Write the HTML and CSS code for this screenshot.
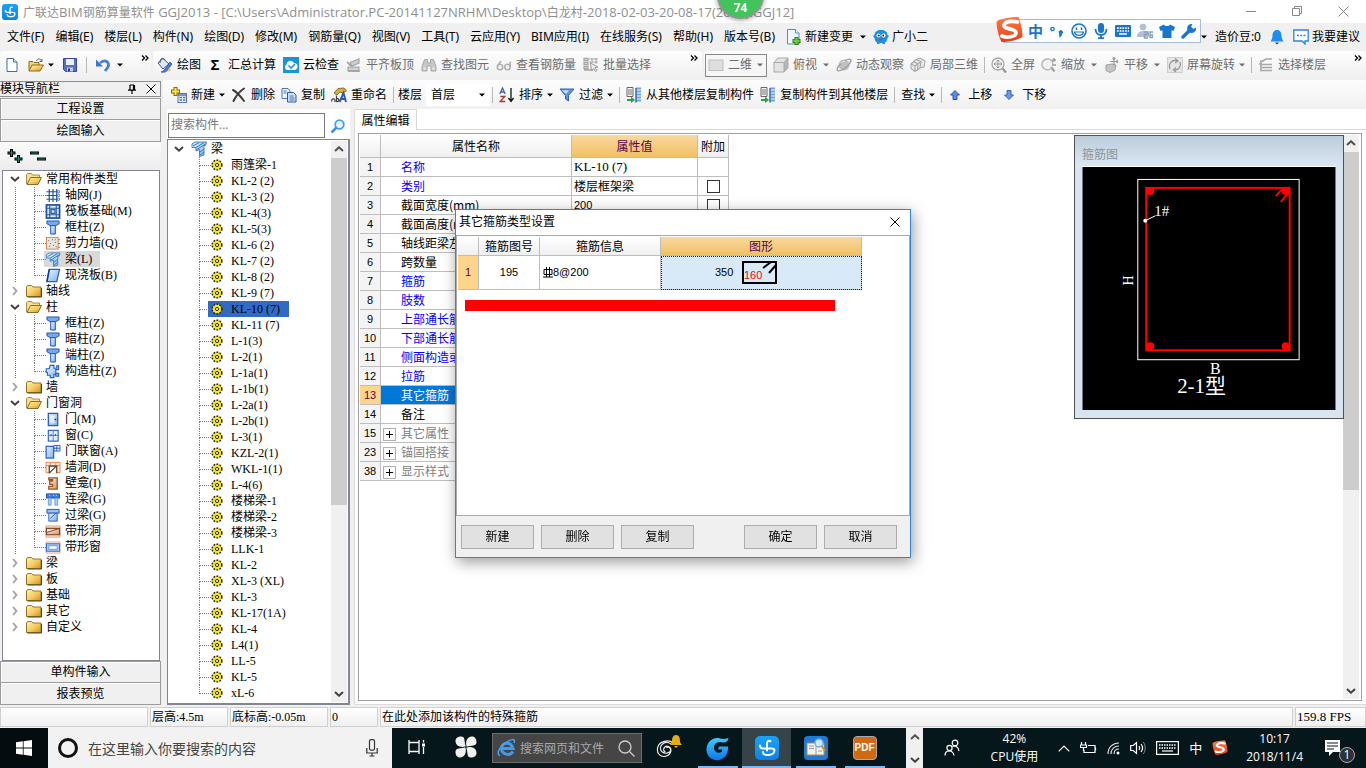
FILE: index.html
```html
<!DOCTYPE html>
<html lang="zh-CN">
<head>
<meta charset="utf-8">
<title>广联达BIM钢筋算量软件 GGJ2013</title>
<link rel="stylesheet" href="styles.css">
</head>
<body>
<svg class="defs" aria-hidden="true">
  <defs>
    <linearGradient id="g-fold" x1="0" y1="0" x2="1" y2="1"><stop offset="0" stop-color="#fff3b0"/><stop offset=".5" stop-color="#f6cf66"/><stop offset="1" stop-color="#d98f14"/></linearGradient>
    <linearGradient id="g-blue" x1="0" y1="0" x2="1" y2="1"><stop offset="0" stop-color="#eaf4ff"/><stop offset="1" stop-color="#7fb0ee"/></linearGradient>
    <linearGradient id="g-brown" x1="0" y1="0" x2="1" y2="1"><stop offset="0" stop-color="#fff4ea"/><stop offset="1" stop-color="#d79262"/></linearGradient>
    <linearGradient id="g-sogou" x1="0" y1="0" x2="0" y2="1"><stop offset="0" stop-color="#ff7a45"/><stop offset="1" stop-color="#ee3d10"/></linearGradient>
    <linearGradient id="g-app" x1="0" y1="0" x2="0" y2="1"><stop offset="0" stop-color="#1ba1f5"/><stop offset="1" stop-color="#0b83ea"/></linearGradient>
    <linearGradient id="g-g" x1="0" y1="0" x2="0" y2="1"><stop offset="0" stop-color="#35d0ff"/><stop offset="1" stop-color="#1273e8"/></linearGradient>
  </defs>
  <symbol id="arrow" viewBox="0 0 6 4"><path d="M0 .5h6L3 3.5z" fill="currentColor"/></symbol>
  <symbol id="more" viewBox="0 0 8 6"><path d="M1 .5 3.5 3 1 5.500M4.500 .5 7 3 4.500 5.500" fill="none" stroke="#000" stroke-width="1.300"/></symbol>
  <symbol id="up" viewBox="0 0 10 6"><path d="M1 5 5 1.300 9 5" fill="none" stroke="#505050" stroke-width="2"/></symbol>
  <symbol id="down" viewBox="0 0 10 6"><path d="M1 1 5 4.700 9 1" fill="none" stroke="#404040" stroke-width="2"/></symbol>
  <symbol id="right" viewBox="0 0 6 10"><path d="M1 1 4.500 5 1 9" fill="none" stroke="#a0a0a0" stroke-width="1.800"/></symbol>
  <symbol id="app" viewBox="0 0 24 24"><rect width="24" height="24" rx="5" fill="url(#g-app)"/><path d="M15.500 5.200C13 4.200 12 5.500 12 8v6.500M5 9.500c0 2 1 3 3 3h8.500c2 0 3 .5 3 2 0 3-3.500 4.500-7 4.500-2.500 0-4.500-1-4.500-3" fill="none" stroke="#fff" stroke-width="2" stroke-linecap="round"/></symbol>
  <symbol id="file" viewBox="0 0 16 16"><path d="M3 1.500h6.500L13 5v9.500H3z" fill="#fdfeff" stroke="#4b6b9a"/><path d="M9.500 1.500V5H13" fill="#dce9f8" stroke="#4b6b9a"/></symbol>
  <symbol id="open" viewBox="0 0 16 16"><path d="M1 13.500V4.500h4l1 1h5v2.500" fill="#f2d27a" stroke="#8a6a20"/><path d="M1 14 4 8h11.500L12 14z" fill="url(#g-fold)" stroke="#8a6a20"/><path d="M8.500 4c1.500-3 4-2.500 5 0m.5-2v2.500h-2.500" fill="none" stroke="#567" /></symbol>
  <symbol id="save" viewBox="0 0 16 16"><path d="M1.500 1.500h13v13h-11l-2-2z" fill="#5a70c8" stroke="#3646a0"/><path d="M4 2h8v6H4z" fill="#e9effb"/><path d="M5 10.500h6v4H5z" fill="#c9cfe0"/><path d="M6 11.500h2v3H6z" fill="#26398a"/></symbol>
  <symbol id="undo" viewBox="0 0 16 16"><path d="M5 6c5-4.500 10-1 8 4l-3 4" fill="none" stroke="#4a7fd4" stroke-width="2.800"/><path d="M1 2.500v7h7z" fill="#3d74cf"/></symbol>
  <symbol id="paint" viewBox="0 0 16 16"><path d="M1 6 6 1.500 12 7 6 12z" fill="#dfe8f5" stroke="#3b5b91"/><path d="M3 6c0-5 3-6 5-3" fill="none" stroke="#33507f"/><path d="M13 5 8 12c-1 2-2 2-4 3 4 .8 6-.5 6.500-2L15 7z" fill="#4c7bd4" stroke="#254b9a" stroke-width=".7"/><path d="m12 10 2 3-3 2z" fill="#f0c537"/></symbol>
  <symbol id="cloud" viewBox="0 0 16 16"><rect width="16" height="16" fill="#1795dc"/><path d="M4 13a3 3 0 0 1-.5-5.500C4 3.500 9 2.500 11 6c3 .2 4 2.500 3.500 4.500C14 12.500 12 13 11 13z" fill="#fff"/><path d="m5.500 8.500 2.500 2.500 4-4" fill="none" stroke="#1795dc" stroke-width="1.600"/></symbol>
  <symbol id="align" viewBox="0 0 16 16"><path d="M4 5.500 13 2v4L6 9zM2 10h11v3.500H2zM2 14.500h12" fill="#cfcfcf" stroke="#a5a5a5" stroke-width="1.200"/><path d="m1 5 4 4" stroke="#999" stroke-width="1.500"/></symbol>
  <symbol id="find" viewBox="0 0 16 16"><path d="M3.500 2.500h3V6h3V2.500h3l2.500 7v4.500H10V9H6v5H1V9.500z" fill="#c8c8c8" stroke="#a8a8a8"/><path d="M2.500 10h2v3h-2zM11.500 10h2v3h-2z" fill="#e2e2e2"/></symbol>
  <symbol id="glasses" viewBox="0 0 16 16"><circle cx="4" cy="10" r="2.700" fill="none" stroke="#b0b0b0" stroke-width="1.600"/><circle cx="11.500" cy="10" r="2.700" fill="none" stroke="#b0b0b0" stroke-width="1.600"/><path d="M1.500 9 5 4M14.200 10V4.500" stroke="#b0b0b0" stroke-width="1.500"/></symbol>
  <symbol id="batch" viewBox="0 0 16 16"><path d="M1 1.500h4v2H1zM1 5.500h4v2H1zM1 9.500h4v2H1zM1 13h9" fill="none" stroke="#a9a9a9" stroke-width="1.300"/><path d="M6 2h9M6 5h9M9 1v5M13 1v6" stroke="#a9a9a9"/><path d="m7.500 6 1 8 2-2.500 2 3 1.500-1-2-3 3-.5z" fill="#eee" stroke="#999"/></symbol>
  <symbol id="flat" viewBox="0 0 16 16"><rect x="1" y="3" width="14" height="10.500" fill="#dedede" stroke="#bdbdbd"/></symbol>
  <symbol id="cube" viewBox="0 0 16 16"><path d="M1 5.500 5 1h10v10l-4 4H1z" fill="#e3e3e3" stroke="#a9a9a9"/><path d="M11 5.500 15 1v10l-4 4z" fill="#b5b5b5"/><path d="M1 5.500h10V15M11 5.500 15 1" stroke="#a9a9a9" fill="none"/></symbol>
  <symbol id="orbit" viewBox="0 0 16 16"><circle cx="8" cy="8" r="5.500" fill="#c0c0c0"/><ellipse cx="8" cy="8" rx="8.500" ry="3" transform="rotate(-40 8 8)" fill="none" stroke="#a2a2a2" stroke-width="1.300"/><path d="M5 6.500c1-2 3-2 4-2" stroke="#eee" fill="none"/></symbol>
  <symbol id="local3d" viewBox="0 0 16 16"><path d="m1 7 5-4.500 5 2L10 11l-5 3.500-4-3zM6 2.500 10 1l5 3-1 6-4 1M1 7l4 2v5.500M5 9l6-4.500M3.500 4.500 8 7l-.5 5.500" fill="#e8e8e8" stroke="#a9a9a9" stroke-width="1.100"/></symbol>
  <symbol id="full" viewBox="0 0 16 16"><circle cx="7" cy="7" r="6" fill="#f2f2f2" stroke="#aaa" stroke-width="1.300"/><path d="M7 3v8M3 7h8M5.500 4.500 7 3l1.500 1.500M5.500 9.500 7 11l1.500-1.500M4.500 5.500 3 7l1.500 1.500M9.500 5.500 11 7 9.500 8.500" fill="none" stroke="#999"/><path d="m11.500 11.500 3.500 4" stroke="#999" stroke-width="2.400"/></symbol>
  <symbol id="zoomi" viewBox="0 0 16 16"><path d="M9.500 12A5.500 5.500 0 1 1 12 7" fill="#f2f2f2" stroke="#b4b4b4" stroke-width="1.400"/><path d="m10 10 3.500 4.500" stroke="#a5a5a5" stroke-width="2.400"/><path d="M11 3h4M13 1v4M11 8h4" stroke="#999" stroke-width="1.300"/></symbol>
  <symbol id="pan" viewBox="0 0 16 16"><path d="M2 8 8 7l4 1-1 5-5 2.500-4-2z" fill="#c4c4c4" stroke="#a2a2a2"/><path d="M10 .5v8M6 4.500h8M10 .5 8.500 2M10 .5 11.500 2M14 4.500 12.500 3M14 4.500 12.500 6" fill="none" stroke="#9b9b9b" stroke-width="1.200"/></symbol>
  <symbol id="rotate" viewBox="0 0 16 16"><rect x=".5" y=".5" width="15" height="15" fill="#e6e6e6" stroke="#cfcfcf"/><path d="M3 12c-2-5 2-10 7-8M13 5c1.500 4-1 8.500-6 8M8 1.500 11 4 8 6M9 15l-2.500-2L9 10.500" fill="none" stroke="#999" stroke-width="1.300"/></symbol>
  <symbol id="floors" viewBox="0 0 16 16"><path d="M2 4h4M1 7h3M4 4.500 8 2h6M4 7.500h10M4 10.500h10M4 13.500h10M3 4.500v10" fill="none" stroke="#a9a9a9" stroke-width="1.700"/></symbol>
  <symbol id="newc" viewBox="0 0 16 16"><path d="M4.500 0v9M0 4.500h9" stroke="#8c6b00" stroke-width="4"/><path d="M4.500 1v7M1 4.500h7" stroke="#ffe14a" stroke-width="2"/><rect x="7" y="6.500" width="8.500" height="9" fill="#eef4fd" stroke="#5776b5"/><path d="M7 8h8.500M8.500 10.500h2.500M12 10.500h2.500M8.500 13h2.500M12 13h2.500" stroke="#5776b5" stroke-width="1.600"/></symbol>
  <symbol id="del" viewBox="0 0 16 16"><path d="M2 3c4 2 8 7 11 11M13 1.500C9 4 5 9 2.500 14" fill="none" stroke="#3d3d3d" stroke-width="2" stroke-linecap="round"/></symbol>
  <symbol id="copy" viewBox="0 0 16 16"><path d="M1 1.500h6L9 4v7.500H1z" fill="#eef4fd" stroke="#4d74b8"/><path d="M6.500 5.500h6L15 8v7H6.500z" fill="#cfe0f7" stroke="#2f5aa8"/><path d="M8.500 9h4M8.500 11h5M8.500 13h5M2.500 4h3M2.500 6h3" stroke="#4d74b8"/></symbol>
  <symbol id="rename" viewBox="0 0 16 16"><path d="M3 6 7 1.500 13 1l2.500 3-3.500 2-3-1-3 3z" fill="#d8b03a" stroke="#6b5310" stroke-width=".8"/><path d="M1 14.500c-1.500-3 3-3.500 3-1.500v2M5.500 8.500v6c3 .5 3-3.500 0-3" fill="none" stroke="#444" stroke-width="1.200"/><path d="m8.500 15 4-9 2.500 9M10 12h4" fill="none" stroke="#2b56b8" stroke-width="1.900"/></symbol>
  <symbol id="sort" viewBox="0 0 16 16"><path d="m.8 7 2.700-6L6.200 7M1.800 5h3.500" fill="none" stroke="#3c61ad" stroke-width="1.300"/><path d="M1.300 9.500h4.500l-4.500 5h5" fill="none" stroke="#a33b33" stroke-width="1.300"/><path d="M12 1v13M9.500 11l2.500 3.500 2.500-3.500" fill="none" stroke="#111" stroke-width="1.300"/></symbol>
  <symbol id="filter" viewBox="0 0 16 16"><path d="M1 2h14L9.500 8.500V14l-3-2V8.500z" fill="#5f93ea" stroke="#2b62c0"/><path d="M3 3.200h7L7 7z" fill="#cfe0fb"/></symbol>
  <symbol id="copyfl" viewBox="0 0 16 16"><path d="M1 .5h6v9H1z" fill="#f5f5f5" stroke="#666"/><path d="M2 3h4M2 5h4M2 7h4" stroke="#777"/><path d="M10 1.500h5M10 4.500h5M10 7.500h5M10 10.500h5M10 13.500h5" stroke="#6fa4e0" stroke-width="2"/><path d="M10 1v14.500" stroke="#2f6bb8" stroke-width="1.500"/><path d="M1 12h4v-2.500L9 13l-4 3v-2H1z" fill="#27a143"/></symbol>
  <symbol id="mvup" viewBox="0 0 10 10"><path d="M5 .5 9.500 5H7v4.500H3V5H.5z" fill="#5b8ce8" stroke="#1f4aa8" stroke-width=".9"/></symbol>
  <symbol id="mvdn" viewBox="0 0 10 10"><path d="M5 9.500 .5 5H3V.5h4V5h2.500z" fill="#6c9bee" stroke="#2d5ab8" stroke-width=".9"/></symbol>
  <symbol id="chg" viewBox="0 0 16 16"><path d="M1.500 .5h8L13 4v11H1.500z" fill="#eef7ff" stroke="#4b8fc4"/><path d="M9.500 .5V4H13" fill="#fff" stroke="#4b8fc4"/><path d="M10.500 8v8M6.500 12h8" stroke="#3a7a1c" stroke-width="4"/><path d="M10.500 9v6M7.500 12h6" stroke="#6cd03a" stroke-width="2.200"/></symbol>
  <symbol id="mascot" viewBox="0 0 16 16"><path d="M8 1C12 1 14.500 3 14.500 6l1.500 1-1.500 2c-.5 3-1.500 4-2.500 4.500V15H9.500v-1h-3v1H4v-1.500C2.500 13 2 11.500 1.500 9L0 7l1.500-1C1.500 3 4 1 8 1z" fill="#1e8fe6"/><circle cx="5.500" cy="6.500" r="2" fill="#fff"/><circle cx="10.500" cy="6.500" r="2" fill="#fff"/><circle cx="5.800" cy="6.500" r=".9" fill="#123"/><circle cx="10.200" cy="6.500" r=".9" fill="#123"/><path d="M5.500 9.500c1.500 1.800 3.500 1.800 5 0" stroke="#c33" fill="none"/></symbol>
  <symbol id="bell" viewBox="0 0 14 16"><path d="M7 1c-3 0-4.500 2.500-4.500 5.500 0 3-1 4.500-2 6h13c-1-1.500-2-3-2-6C11.500 3.500 10 1 7 1z" fill="#1e8cf0"/><path d="M5 13.500h4L7 15.500z" fill="#0a3c80"/></symbol>
  <symbol id="talk" viewBox="0 0 16 16"><path d="M.8 1h14.400v11H12v3l-3-3H.8z" fill="#fff" stroke="#2b82dd" stroke-width="1.300"/><path d="M4 6.500h2M7.200 6.500h2M10.400 6.500h2" stroke="#2b82dd" stroke-width="1.600"/></symbol>
  <symbol id="sogou" viewBox="0 0 28 28"><path d="M3 4C9 2 17 .5 23 1c2 5 4 12 4 20-5 3-14 5-21 5C3 20 1 11 1 6z" fill="url(#g-sogou)"/><path d="M22 6c-6-1.500-13-.5-13.500 3.500S20 12 20.500 16.500 11 22 6.500 20" fill="none" stroke="#fff" stroke-width="3.800" stroke-linecap="round"/></symbol>
  <symbol id="smile" viewBox="0 0 16 16"><circle cx="8" cy="8" r="7" fill="none" stroke="#1a75cc" stroke-width="1.600"/><path d="M5.500 4.500v2.500M10.500 4.500v2.500" stroke="#1a75cc" stroke-width="1.500"/><path d="M3.500 9h9c-1 4.500-8 4.500-9 0z" fill="none" stroke="#1a75cc" stroke-width="1.200"/></symbol>
  <symbol id="mic" viewBox="0 0 16 16"><rect x="5" y="0" width="6" height="10" rx="3" fill="#1a75cc"/><path d="M2.500 6c0 8 11 8 11 0M8 12v3M5 15.200h6" fill="none" stroke="#1a75cc" stroke-width="1.800"/></symbol>
  <symbol id="kbd" viewBox="0 0 16 12"><rect width="16" height="12" rx="1" fill="#1a75cc"/><path d="M2 3.200h12M2 6h12" stroke="#fff" stroke-width="1.700" stroke-dasharray="1.700 1"/><path d="M4 9h8" stroke="#fff" stroke-width="1.500"/></symbol>
  <symbol id="person" viewBox="0 0 16 16"><circle cx="6" cy="4" r="3.300" fill="#b3bfd3"/><path d="M0 14c0-8 12-8 12-2v2z" fill="#b3bfd3"/><path d="M7 9h4v2.500H7.500V15H11M12.500 9H16M13 9v5.500h2.500V12H13" fill="none" stroke="#8e9db8" stroke-width="1.400"/></symbol>
  <symbol id="shirt" viewBox="0 0 16 16"><path d="m5 1.500c1 2 5 2 6 0L16 4l-1.500 4-2-.7V15h-9V7.300l-2 .7L0 4z" fill="#1a75cc"/></symbol>
  <symbol id="wrench" viewBox="0 0 16 16"><path d="m2 14 8-8" stroke="#1a75cc" stroke-width="3.400" stroke-linecap="round"/><path d="M15 4.500 12 6 10 4l1.500-3A4.500 4.500 0 1 0 15 4.500z" fill="#1a75cc"/></symbol>
  <symbol id="pin" viewBox="0 0 10 10"><path d="M3 1v5M7.500 1v5M3 1h4M6.500 1v5M1 6.200h8M5 6v4" fill="none" stroke="#000" stroke-width="1.200"/></symbol>
  <symbol id="x" viewBox="0 0 10 10"><path d="m.5.5 9 9m0-9-9 9" stroke="currentColor" fill="none"/></symbol>
  <symbol id="expand" viewBox="0 0 16 16"><path d="M4.500 1v8M.5 5h8M11.500 7v8M7.500 11h8" stroke="#000" stroke-width="3"/><path d="M4.500 2v6M1.500 5h6M11.500 8v6M8.500 11h6" stroke="#1c8a78" stroke-width="1"/></symbol>
  <symbol id="collapse" viewBox="0 0 16 16"><path d="M0 5h9M7 11h9" stroke="#000" stroke-width="3"/><path d="M1 5h7M8 11h7" stroke="#1c8a78"/></symbol>
  <symbol id="fopen" viewBox="0 0 16 14"><path d="M.5 12V2.500l1-1h4l1 1.500h7V5" fill="#f9e08e" stroke="#a98a4a"/><path d="M1 12.500 4.500 5.500h11L12 12.500z" fill="url(#g-fold)" stroke="#8e6b28"/></symbol>
  <symbol id="fclose" viewBox="0 0 16 14"><path d="M.5 12.500V3l1-1.500h4L7 3h8v9.500z" fill="url(#g-fold)" stroke="#94742f"/><path d="M1.500 13h14V4" fill="none" stroke="#5d4210"/></symbol>
  <symbol id="grid" viewBox="0 0 16 16"><path d="M1 4h12M1 8h12M1 12h12M4 1v14M8 1v14M12 1v14" stroke="#1f52a0" stroke-width="1.300"/><g fill="#fff" stroke="#2f6fd0"><circle cx="14" cy="4" r="1.200"/><circle cx="14" cy="8" r="1.200"/><circle cx="14" cy="12" r="1.200"/></g></symbol>
  <symbol id="raft" viewBox="0 0 16 16"><rect x="1" y="1" width="14" height="14" fill="#dbeaff" stroke="#1f4e96" stroke-width="1.800"/><path d="M4.500 1v14M11.500 1v14M1 4.500h14M1 11.500h14M6 6h4v4H6z" fill="none" stroke="#2a5fb0" stroke-width="1.200"/></symbol>
  <symbol id="col" viewBox="0 0 16 16"><path d="M1.500 1h13v3l-3.500 2H5L1.500 4z" fill="#77a8ee" stroke="#1d52b0"/><path d="M5.500 6h5v9h-5z" fill="url(#g-blue)" stroke="#1d52b0"/></symbol>
  <symbol id="wall" viewBox="0 0 16 16"><rect x="1" y="1.500" width="12.500" height="12.500" fill="#e9e4df" stroke="#d3814d"/><path d="M3 5h1M7 4h1M10 7h1M5 8h1M8 10h1M4 11h1M11 11.500h1M10 4h1" stroke="#555"/><path d="M13.500 4h2M13.500 8h2M13.500 12h2" stroke="#c06020"/></symbol>
  <symbol id="beam" viewBox="0 0 16 16"><path d="M1 3 4 1h11.500l-1 3.500h-1.500V14L8.500 15.500V8.500L5 10V6.500H1z" fill="url(#g-blue)" stroke="#3b88cc"/><path d="m2 5 6-3.500M5 6.500l8-5M5 9l9.500-6M9 11l4-3M9 14l4-3" stroke="#2c7cc8"/></symbol>
  <symbol id="slab" viewBox="0 0 16 16"><path d="M4 1.500h11L12 14.500H1.500z" fill="url(#g-blue)" stroke="#2560b8" stroke-width="1.300"/><path d="M4 1.500 1.500 14.500" stroke="#0f3c88" stroke-width="1.600"/></symbol>
  <symbol id="zcol" viewBox="0 0 16 16"><path d="M5 1.500h4v3h3V2h2v4h-3v4h3v3h-3v-2H9v3.500H5V12H2V9H.8V5H4z" fill="url(#g-blue)" stroke="#2560b8" stroke-width="1.200"/></symbol>
  <symbol id="door" viewBox="0 0 16 16"><rect x="3" y="1.500" width="10" height="13" fill="url(#g-blue)" stroke="#2560c8" stroke-width="1.400"/><rect x="5" y="4" width="5" height="8" fill="#fff" opacity=".6"/><path d="M9.500 8h2" stroke="#123c90" stroke-width="1.500"/></symbol>
  <symbol id="win" viewBox="0 0 16 16"><rect x="3" y="2.500" width="10.500" height="11.500" fill="#deedff" stroke="#2560c8" stroke-width="1.200"/><path d="M8.200 2.500V14M3 8h10.500" stroke="#4a83dd"/><path d="M6 6.500v2M10.500 6.500v2" stroke="#123c90"/></symbol>
  <symbol id="dwin" viewBox="0 0 16 16"><rect x=".7" y="2.500" width="8" height="12.500" fill="url(#g-blue)" stroke="#2560c8" stroke-width="1.300"/><path d="M9 1.500h6.500v6H9zM12 1.500v6M9 4.500h6.500" fill="#e3f0ff" stroke="#2560c8"/></symbol>
  <symbol id="whole" viewBox="0 0 16 16"><path d="M.5 2.500h15v11H.5zM.5 6h15M5 2.500V6M11 2.500V6" fill="#fbeadf" stroke="#e0834d"/><path d="M4 14V6.500h8V14M4 14l7-7" fill="#fff" stroke="#5c3b24" stroke-width="1.300"/></symbol>
  <symbol id="niche" viewBox="0 0 16 16"><path d="M3.500 2h9v12h-9v-3h4V9h-3V5.500h3V4h-4z" fill="url(#g-brown)" stroke="#a0541d" stroke-width="1.400"/></symbol>
  <symbol id="lbeam" viewBox="0 0 16 16"><path d="M1 2h14v4.500H1z" fill="#3b7ad8" stroke="#1d52b0"/><path d="M3 6.500h3V14H3zM10 6.500h3V14h-3z" fill="#a9cdf8" stroke="#6b9ee6"/><path d="M4 3.500h1M8 3.500h1M11 3.500h1" stroke="#fff"/></symbol>
  <symbol id="obeam" viewBox="0 0 16 16"><path d="M1.500 1.500h13v4h-13z" fill="#9ac3f6" stroke="#1d52b0"/><path d="M3.500 5.500h9V14h-9zM5 11l7-6" fill="url(#g-blue)" stroke="#2a64bd"/></symbol>
  <symbol id="bhole" viewBox="0 0 16 16"><path d="M.5 2h15v12H.5z" fill="#f8ded0" stroke="#e6a184"/><path d="M1 4.500h14v7H1z" fill="url(#g-brown)" stroke="#7b3c15" stroke-width="1.200"/><path d="M1 9 14 5H1z" fill="#fff" stroke="#7b3c15"/></symbol>
  <symbol id="bwin" viewBox="0 0 16 16"><path d="M.5 2h15v12H.5z" fill="#fbe4dc" stroke="#efb4a4"/><path d="M1 4h14v8H1z" fill="#a9cbfa" stroke="#3c70cf" stroke-width="1.200"/><path d="M3.500 6h9v4h-9z" fill="#f2f8ff" stroke="#6a98e4"/></symbol>
  <symbol id="gear" viewBox="0 0 12 12"><circle cx="6" cy="6" r="4.700" fill="#f6ee00" stroke="#222" stroke-width="1.800" stroke-dasharray="1.800 1.200"/><circle cx="6" cy="6" r="3.900" fill="#f6ee00"/><circle cx="6" cy="6" r="1.600" fill="#fff36b" stroke="#222"/></symbol>
  <symbol id="mag" viewBox="0 0 16 16"><circle cx="9.500" cy="6.500" r="4.300" fill="#e6f5ff" stroke="#3fa0e8" stroke-width="1.800"/><path d="m6.500 9.500-5 5" stroke="#3f8fe0" stroke-width="2.600"/></symbol>
</svg>

<header class="titlebar">
  <svg class="ic"><use href="#app"/></svg>
  <h1><span>广联达</span>BIM<span>钢筋算量软件</span> GGJ2013 - [C:\Users\Administrator.PC-20141127NRHM\Desktop\<span>白龙村</span>-2018-02-03-20-08-17(2666).GGJ12]</h1>
  <div class="winbtns">
    <button aria-label="最小化"><svg viewBox="0 0 11 11"><path d="M0 5.500h10" stroke="#888"/></svg></button>
    <button aria-label="还原"><svg viewBox="0 0 11 11"><path d="M.5 2.500h7v7h-7zM2.500 2.500v-2h7v7h-2" fill="none" stroke="#888"/></svg></button>
    <button aria-label="关闭"><svg viewBox="0 0 11 11"><path d="m.5.5 10 10m0-10-10 10" stroke="#888"/></svg></button>
  </div>
</header>

<nav class="menubar">
  <button>文件(F)</button><button>编辑(E)</button><button>楼层(L)</button><button>构件(N)</button><button>绘图(D)</button><button>修改(M)</button><button>钢筋量(Q)</button><button>视图(V)</button><button>工具(T)</button><button>云应用(Y)</button><button>BIM应用(I)</button><button>在线服务(S)</button><button>帮助(H)</button><button>版本号(B)</button>
  <button><svg class="ic"><use href="#chg"/></svg>新建变更<svg class="ar wide"><use href="#arrow"/></svg></button>
  <button class="helper"><svg class="ic"><use href="#mascot"/></svg>广小二</button>
  <div class="account">
    <svg class="ar"><use href="#arrow"/></svg>
    <button>造价豆:0</button>
    <button aria-label="消息"><svg class="ic"><use href="#bell"/></svg></button>
    <button><svg class="ic"><use href="#talk"/></svg>我要建议</button>
  </div>
</nav>

<div class="toolbar main">
  <div class="strip files">
    <button aria-label="新建"><svg class="ic"><use href="#file"/></svg></button>
    <button aria-label="打开"><svg class="ic"><use href="#open"/></svg><svg class="ar"><use href="#arrow"/></svg></button>
    <button aria-label="保存"><svg class="ic"><use href="#save"/></svg></button>
    <i class="sep"></i>
    <button aria-label="撤销"><svg class="ic"><use href="#undo"/></svg><svg class="ar wide"><use href="#arrow"/></svg></button>
    <svg class="more"><use href="#more"/></svg>
  </div>
  <div class="strip calc">
    <button><svg class="ic"><use href="#paint"/></svg>绘图</button>
    <button><b class="sigma">Σ</b>汇总计算</button>
    <button><svg class="ic"><use href="#cloud"/></svg>云检查</button>
    <button disabled><svg class="ic"><use href="#align"/></svg>平齐板顶</button>
    <button disabled><svg class="ic"><use href="#find"/></svg>查找图元</button>
    <button disabled><svg class="ic"><use href="#glasses"/></svg>查看钢筋量</button>
    <button disabled><svg class="ic"><use href="#batch"/></svg>批量选择</button>
    <svg class="more"><use href="#more"/></svg>
  </div>
  <div class="strip view">
    <label class="dim"><svg class="ic"><use href="#flat"/></svg><select disabled aria-label="视图"><option>二维</option></select><svg class="ar"><use href="#arrow"/></svg></label>
    <button disabled><svg class="ic"><use href="#cube"/></svg>俯视<svg class="ar wide"><use href="#arrow"/></svg></button>
    <button disabled><svg class="ic"><use href="#orbit"/></svg>动态观察</button>
    <button disabled><svg class="ic"><use href="#local3d"/></svg>局部三维</button>
    <i class="sep"></i>
    <button disabled><svg class="ic"><use href="#full"/></svg>全屏</button>
    <button disabled><svg class="ic"><use href="#zoomi"/></svg>缩放<svg class="ar wide"><use href="#arrow"/></svg></button>
    <button disabled><svg class="ic"><use href="#pan"/></svg>平移<svg class="ar wide"><use href="#arrow"/></svg></button>
    <button disabled><svg class="ic"><use href="#rotate"/></svg>屏幕旋转<svg class="ar"><use href="#arrow"/></svg></button>
    <i class="sep"></i>
    <button disabled><svg class="ic"><use href="#floors"/></svg>选择楼层</button>
    <svg class="more"><use href="#more"/></svg>
  </div>
</div>

<div class="workspace">
  <aside class="dock">
    <div class="dockhead"><h2>模块导航栏</h2><svg class="s10"><use href="#pin"/></svg><button aria-label="关闭"><svg class="s10"><use href="#x"/></svg></button></div>
    <button class="section">工程设置</button>
    <button class="section">绘图输入</button>
    <div class="docktools"><button aria-label="展开"><svg class="ic"><use href="#expand"/></svg></button><button aria-label="折叠"><svg class="ic"><use href="#collapse"/></svg></button></div>
    <ul class="tree modules">
      <li class="open"><div><svg class="tw"><use href="#down"/></svg><svg class="fo"><use href="#fopen"/></svg>常用构件类型</div>
        <ul>
          <li><svg class="ic"><use href="#grid"/></svg><span>轴网(J)</span></li>
          <li><svg class="ic"><use href="#raft"/></svg><span>筏板基础(M)</span></li>
          <li><svg class="ic"><use href="#col"/></svg><span>框柱(Z)</span></li>
          <li><svg class="ic"><use href="#wall"/></svg><span>剪力墙(Q)</span></li>
          <li class="current"><svg class="ic"><use href="#beam"/></svg><span>梁(L)</span></li>
          <li><svg class="ic"><use href="#slab"/></svg><span>现浇板(B)</span></li>
        </ul></li>
      <li><div><svg class="tw"><use href="#right"/></svg><svg class="fo"><use href="#fclose"/></svg>轴线</div></li>
      <li class="open"><div><svg class="tw"><use href="#down"/></svg><svg class="fo"><use href="#fopen"/></svg>柱</div>
        <ul>
          <li><svg class="ic"><use href="#col"/></svg><span>框柱(Z)</span></li>
          <li><svg class="ic"><use href="#col"/></svg><span>暗柱(Z)</span></li>
          <li><svg class="ic"><use href="#col"/></svg><span>端柱(Z)</span></li>
          <li><svg class="ic"><use href="#zcol"/></svg><span>构造柱(Z)</span></li>
        </ul></li>
      <li><div><svg class="tw"><use href="#right"/></svg><svg class="fo"><use href="#fclose"/></svg>墙</div></li>
      <li class="open"><div><svg class="tw"><use href="#down"/></svg><svg class="fo"><use href="#fopen"/></svg>门窗洞</div>
        <ul>
          <li><svg class="ic"><use href="#door"/></svg><span>门(M)</span></li>
          <li><svg class="ic"><use href="#win"/></svg><span>窗(C)</span></li>
          <li><svg class="ic"><use href="#dwin"/></svg><span>门联窗(A)</span></li>
          <li><svg class="ic"><use href="#whole"/></svg><span>墙洞(D)</span></li>
          <li><svg class="ic"><use href="#niche"/></svg><span>壁龛(I)</span></li>
          <li><svg class="ic"><use href="#lbeam"/></svg><span>连梁(G)</span></li>
          <li><svg class="ic"><use href="#obeam"/></svg><span>过梁(G)</span></li>
          <li><svg class="ic"><use href="#bhole"/></svg><span>带形洞</span></li>
          <li><svg class="ic"><use href="#bwin"/></svg><span>带形窗</span></li>
        </ul></li>
      <li><div><svg class="tw"><use href="#right"/></svg><svg class="fo"><use href="#fclose"/></svg>梁</div></li>
      <li><div><svg class="tw"><use href="#right"/></svg><svg class="fo"><use href="#fclose"/></svg>板</div></li>
      <li><div><svg class="tw"><use href="#right"/></svg><svg class="fo"><use href="#fclose"/></svg>基础</div></li>
      <li><div><svg class="tw"><use href="#right"/></svg><svg class="fo"><use href="#fclose"/></svg>其它</div></li>
      <li><div><svg class="tw"><use href="#right"/></svg><svg class="fo"><use href="#fclose"/></svg>自定义</div></li>
    </ul>
    <button class="section">单构件输入</button>
    <button class="section">报表预览</button>
  </aside>

  <main class="editor">
    <div class="toolbar sub">
      <button><svg class="ic"><use href="#newc"/></svg>新建<svg class="ar"><use href="#arrow"/></svg></button>
      <button><svg class="ic"><use href="#del"/></svg>删除</button>
      <button><svg class="ic"><use href="#copy"/></svg>复制</button>
      <button><svg class="ic"><use href="#rename"/></svg>重命名</button>
      <i class="sep"></i>
      <label class="floor">楼层<span class="combo"><select><option>首层</option></select><svg class="ar"><use href="#arrow"/></svg></span></label>
      <i class="sep"></i>
      <button><svg class="ic"><use href="#sort"/></svg>排序<svg class="ar"><use href="#arrow"/></svg></button>
      <button><svg class="ic"><use href="#filter"/></svg>过滤<svg class="ar"><use href="#arrow"/></svg></button>
      <i class="sep"></i>
      <button><svg class="ic"><use href="#copyfl"/></svg>从其他楼层复制构件</button>
      <button><svg class="ic"><use href="#copyfl"/></svg>复制构件到其他楼层</button>
      <i class="sep"></i>
      <button>查找<svg class="ar"><use href="#arrow"/></svg></button>
      <i class="sep"></i>
      <button class="move"><svg class="s10"><use href="#mvup"/></svg>上移</button>
      <button class="move"><svg class="s10"><use href="#mvdn"/></svg>下移</button>
    </div>
    <div class="panes">
      <section class="components">
        <div class="search"><input type="text" placeholder="搜索构件..." aria-label="搜索构件"><button aria-label="搜索"><svg class="ic"><use href="#mag"/></svg></button></div>
        <div class="listbox">
          <ul class="tree beams">
            <li class="open"><div><svg class="tw"><use href="#down"/></svg><svg class="ic"><use href="#beam"/></svg>梁</div>
              <ul>
                <li><svg class="ge"><use href="#gear"/></svg><span class="zh">雨篷梁-1</span></li>
                <li><svg class="ge"><use href="#gear"/></svg><span>KL-2 (2)</span></li>
                <li><svg class="ge"><use href="#gear"/></svg><span>KL-3 (2)</span></li>
                <li><svg class="ge"><use href="#gear"/></svg><span>KL-4(3)</span></li>
                <li><svg class="ge"><use href="#gear"/></svg><span>KL-5(3)</span></li>
                <li><svg class="ge"><use href="#gear"/></svg><span>KL-6 (2)</span></li>
                <li><svg class="ge"><use href="#gear"/></svg><span>KL-7 (2)</span></li>
                <li><svg class="ge"><use href="#gear"/></svg><span>KL-8 (2)</span></li>
                <li><svg class="ge"><use href="#gear"/></svg><span>KL-9 (7)</span></li>
                <li class="picked"><svg class="ge"><use href="#gear"/></svg><span>KL-10 (7)</span></li>
                <li><svg class="ge"><use href="#gear"/></svg><span>KL-11 (7)</span></li>
                <li><svg class="ge"><use href="#gear"/></svg><span>L-1(3)</span></li>
                <li><svg class="ge"><use href="#gear"/></svg><span>L-2(1)</span></li>
                <li><svg class="ge"><use href="#gear"/></svg><span>L-1a(1)</span></li>
                <li><svg class="ge"><use href="#gear"/></svg><span>L-1b(1)</span></li>
                <li><svg class="ge"><use href="#gear"/></svg><span>L-2a(1)</span></li>
                <li><svg class="ge"><use href="#gear"/></svg><span>L-2b(1)</span></li>
                <li><svg class="ge"><use href="#gear"/></svg><span>L-3(1)</span></li>
                <li><svg class="ge"><use href="#gear"/></svg><span>KZL-2(1)</span></li>
                <li><svg class="ge"><use href="#gear"/></svg><span>WKL-1(1)</span></li>
                <li><svg class="ge"><use href="#gear"/></svg><span>L-4(6)</span></li>
                <li><svg class="ge"><use href="#gear"/></svg><span class="zh">楼梯梁-1</span></li>
                <li><svg class="ge"><use href="#gear"/></svg><span class="zh">楼梯梁-2</span></li>
                <li><svg class="ge"><use href="#gear"/></svg><span class="zh">楼梯梁-3</span></li>
                <li><svg class="ge"><use href="#gear"/></svg><span>LLK-1</span></li>
                <li><svg class="ge"><use href="#gear"/></svg><span>KL-2</span></li>
                <li><svg class="ge"><use href="#gear"/></svg><span>XL-3 (XL)</span></li>
                <li><svg class="ge"><use href="#gear"/></svg><span>KL-3</span></li>
                <li><svg class="ge"><use href="#gear"/></svg><span>KL-17(1A)</span></li>
                <li><svg class="ge"><use href="#gear"/></svg><span>KL-4</span></li>
                <li><svg class="ge"><use href="#gear"/></svg><span>L4(1)</span></li>
                <li><svg class="ge"><use href="#gear"/></svg><span>LL-5</span></li>
                <li><svg class="ge"><use href="#gear"/></svg><span>KL-5</span></li>
                <li><svg class="ge"><use href="#gear"/></svg><span>xL-6</span></li>
              </ul></li>
          </ul>
          <div class="scroll list"><svg><use href="#up"/></svg><i></i><svg><use href="#down"/></svg></div>
        </div>
      </section>

      <section class="props">
        <div class="tabs"><button>属性编辑</button></div>
        <div class="sheet">
          <table class="grid">
            <colgroup><col class="c-no"><col class="c-name"><col class="c-val"><col class="c-add"></colgroup>
            <thead><tr><th></th><th>属性名称</th><th class="hot">属性值</th><th>附加</th></tr></thead>
            <tbody>
              <tr><th>1</th><td class="key">名称</td><td class="latin">KL-10 (7)</td><td></td></tr>
              <tr><th>2</th><td class="key">类别</td><td>楼层框架梁</td><td class="tick"><input type="checkbox" aria-label="附加类别"></td></tr>
              <tr><th>3</th><td>截面宽度(mm)</td><td class="num">200</td><td class="tick"><input type="checkbox" aria-label="附加截面宽度"></td></tr>
              <tr><th>4</th><td>截面高度(mm)</td><td></td><td></td></tr>
              <tr><th>5</th><td>轴线距梁左边线距离</td><td></td><td></td></tr>
              <tr><th>6</th><td>跨数量</td><td></td><td></td></tr>
              <tr><th>7</th><td class="key">箍筋</td><td></td><td></td></tr>
              <tr><th>8</th><td class="key">肢数</td><td></td><td></td></tr>
              <tr><th>9</th><td class="key">上部通长筋</td><td></td><td></td></tr>
              <tr><th>10</th><td class="key">下部通长筋</td><td></td><td></td></tr>
              <tr><th>11</th><td class="key">侧面构造或受扭筋</td><td></td><td></td></tr>
              <tr><th>12</th><td class="key">拉筋</td><td></td><td></td></tr>
              <tr class="active"><th>13</th><td>其它箍筋</td><td></td><td></td></tr>
              <tr><th>14</th><td>备注</td><td></td><td></td></tr>
              <tr class="group"><th>15</th><td><button aria-label="展开其它属性"><svg viewBox="0 0 11 11"><path d="M2 5.500h7M5.500 2v7" stroke="#000"/></svg></button>其它属性</td><td></td><td></td></tr>
              <tr class="group"><th>23</th><td><button aria-label="展开锚固搭接"><svg viewBox="0 0 11 11"><path d="M2 5.500h7M5.500 2v7" stroke="#000"/></svg></button>锚固搭接</td><td></td><td></td></tr>
              <tr class="group"><th>38</th><td><button aria-label="展开显示样式"><svg viewBox="0 0 11 11"><path d="M2 5.500h7M5.500 2v7" stroke="#000"/></svg></button>显示样式</td><td></td><td></td></tr>
            </tbody>
          </table>
          <div class="scroll page"><svg><use href="#up"/></svg><i></i><svg><use href="#down"/></svg></div>
          <figure class="preview">
            <figcaption>箍筋图</figcaption>
            <svg viewBox="0 0 254 244">
              <rect width="254" height="244" fill="#000"/>
              <rect x="55.500" y="12.500" width="162" height="181" fill="none" stroke="#fff"/>
              <rect x="64" y="21" width="144" height="163" fill="none" stroke="#f00" stroke-width="2"/>
              <g fill="#f00"><circle cx="68" cy="24" r="4"/><circle cx="204" cy="24" r="4"/><circle cx="68" cy="180" r="4"/><circle cx="204" cy="180" r="4"/></g>
              <path d="M204 22c-5 0-7 4-10 7M207 26l-8 9" fill="none" stroke="#f00" stroke-width="2"/>
              <path d="m63 54 10-5" stroke="#fff"/><circle cx="63" cy="54" r="2" fill="#fff"/>
              <g class="dwg"><text x="72" y="49" font-size="15">1#</text><text x="128" y="208" font-size="16">B</text><text x="95" y="227" font-size="21">2-1型</text><text transform="translate(51 119) rotate(-90)" font-size="14">H</text></g>
            </svg>
          </figure>
        </div>
      </section>
    </div>
  </main>
</div>

<footer class="status"><span class="s-blank"></span><span class="s-h">层高:4.5m</span><span class="s-b">底标高:-0.05m</span><span class="s-z">0</span><span class="s-msg">在此处添加该构件的特殊箍筋</span><span class="s-fps">159.8 FPS</span></footer>

<footer class="taskbar">
  <button class="start" aria-label="开始"><svg viewBox="0 0 16 16"><path d="M0 2.200 6.800 1.300v6.300H0zM7.600 1.200 16 0v7.600H7.600zM0 8.400h6.800v6.300L0 13.800zM7.600 8.400H16V16l-8.400-1.200z" fill="#fff"/></svg></button>
  <label class="cortana"><svg class="ring" viewBox="0 0 20 20"><circle cx="10" cy="10" r="8.500" fill="none" stroke="#111" stroke-width="3"/></svg><input type="text" placeholder="在这里输入你要搜索的内容" aria-label="搜索"><svg class="tmic" viewBox="0 0 12 18"><rect x="3.500" y=".7" width="5" height="10.500" rx="1.500" fill="none" stroke="#333" stroke-width="1.200"/><path d="M.8 9v5h10.400V9M6 14v3M3.500 17h5" fill="none" stroke="#333" stroke-width="1.200"/></svg></label>
  <button class="t48" aria-label="任务视图"><svg width="18" height="16" viewBox="0 0 18 16"><path d="M1 3.500h10v9H1zM1 1v2.500M11 1v2.500M1 12.500V15M11 12.500V15M15.500 1v2.500M15.500 8v7" fill="none" stroke="#fff" stroke-width="1.300"/><path d="M14 4.500h3v3h-3z" fill="#fff"/></svg></button>
  <button class="t48" aria-label="浏览器"><svg width="22" height="22" viewBox="0 0 22 22"><g fill="#f0f0f0"><path id="petal" d="M10.700 10.300C6 12 .5 10 .5 5 .5 2 3 .5 6 .5c4.500 0 3 5 4.700 9.800z"/><use href="#petal" transform="rotate(90 11 11)"/><use href="#petal" transform="rotate(180 11 11)"/><use href="#petal" transform="rotate(270 11 11)"/></g></svg></button>
  <label class="iesearch"><svg width="20" height="20" viewBox="0 0 20 20"><path d="M16 13.500c-3 5-11.500 3-11.500-3s9-8 11.500 0H5" fill="none" stroke="#3f9bee" stroke-width="3"/><path d="M3 17.500C-1 17 2 9 8 5s11-5 9 0" fill="none" stroke="#4aa3f0" stroke-width="1.500"/></svg><input type="text" placeholder="搜索网页和文件" aria-label="搜索网页和文件"><svg width="17" height="17" viewBox="0 0 17 17"><circle cx="7" cy="7" r="6" fill="none" stroke="#ccc" stroke-width="1.300"/><path d="m11.500 11.500 5 5" stroke="#ccc" stroke-width="1.300"/></svg></label>
  <button class="t48" aria-label="提醒"><svg width="28" height="26" viewBox="0 0 28 26"><path d="M18 9C14 5 4 7 2.500 14c-1 7 5 9.500 9 8 5-2 6-8 2-9.500s-7 4-3 5.500M16 10C10 6 5 11 5.500 15s6 5.500 9 3-1-6.500-3-4" fill="none" stroke="#e8e8e8" stroke-width="1.200"/><path d="M21 1c-3 0-4 3-4 6 0 2-1 3-2 4h12c-1-1-2-2-2-4 0-3-1-6-4-6zM19 12h4l-2 2z" fill="#e7ae10"/></svg></button>
  <button class="t48 run" aria-label="广联达"><svg width="25" height="25" viewBox="0 0 25 25"><path d="M23.500 2c-1 4-3 5-6 4.500-5-1.500-9 1.500-8.500 6 .5 4 5 5.500 8 3v-2h-4l1-3h9c.5 7-3 12-8.500 13.500C7 25.500 1 20 1.500 13 2 5 9 .5 15 2.500c3 .8 6 .5 8.500-.5z" fill="url(#g-g)"/></svg></button>
  <button class="t48 run on" aria-label="GGJ2013"><svg width="24" height="24"><use href="#app"/></svg></button>
  <button class="t48 run" aria-label="词典"><svg width="24" height="24" viewBox="0 0 24 24"><rect width="24" height="24" rx="4" fill="#1e7bd6"/><path d="M3 7h8l1 1 1-1h7v12H3z" fill="#f6f2ea" stroke="#b08d5a"/><path d="M12 8v11M5 10h5M5 12.500h5M14 15h4" stroke="#999"/><circle cx="15" cy="7" r="4" fill="#cfe8ff" stroke="#6ab0ee" stroke-width="1.500"/><path d="m17.500 10 3.500 5" stroke="#e8892a" stroke-width="2"/></svg></button>
  <button class="t48 run" aria-label="PDF"><span class="pdf">PDF</span></button>
  <div class="tscroll"><svg><use href="#up"/></svg><svg><use href="#down"/></svg></div>
  <div class="tray">
    <svg width="16" height="18" viewBox="0 0 16 18"><circle cx="11" cy="4" r="2.800" fill="none" stroke="#fff" stroke-width="1.200"/><circle cx="5.500" cy="9" r="2.600" fill="none" stroke="#fff" stroke-width="1.200"/><path d="M1 16.500c0-6 8-6 9 0M8.500 7.500c3-1.500 6 .5 6.500 4.500" fill="none" stroke="#fff" stroke-width="1.200"/></svg>
    <div class="cpu">42%<br>CPU使用</div>
    <svg width="12" height="7" viewBox="0 0 12 7"><path d="m.7 6.300 5.300-5.300 5.300 5.300" fill="none" stroke="#fff" stroke-width="1.200"/></svg>
    <svg width="17" height="12" viewBox="0 0 17 12"><path d="M8 3.500h7v7H4V8M15.500 5.500v3M1.500 0v3M5.500 0v3M.5 3h6v2.500H.5zM3.500 5.500V9" fill="none" stroke="#fff" stroke-width="1.200"/></svg>
    <svg width="13" height="13" viewBox="0 0 13 13"><path d="M1 12C1 5 6 1 12 1M4 12c0-5 3.500-8 8-8M7 12c0-3 2-5 5-5" fill="none" stroke="#ddd" stroke-width="1.200"/><circle cx="11" cy="11" r="1.500" fill="#fff"/></svg>
    <svg width="16" height="14" viewBox="0 0 16 14"><path d="M.7 4.500h2.500l3.300-3v11l-3.300-3H.7z" fill="none" stroke="#fff" stroke-width="1.200"/><path d="M9 5c1 1.300 1 2.700 0 4M11 3c2 2.500 2 5.500 0 8" fill="none" stroke="#fff" stroke-width="1.200"/><path d="M13.300 1c2.500 3.500 2.500 8.500 0 12" fill="none" stroke="#889"/></svg>
    <svg width="23" height="14" viewBox="0 0 23 14"><rect x=".6" y=".6" width="21.800" height="12.800" fill="none" stroke="#fff" stroke-width="1.200"/><path d="M3 4h17M3 7h17" stroke="#fff" stroke-width="1.300" stroke-dasharray="1.500 1"/><path d="M6 10h11" stroke="#fff" stroke-width="1.200"/></svg>
    <span class="lang">中</span>
    <svg width="16" height="16"><use href="#sogou"/></svg>
    <div class="clock">10:17<br>2018/11/4</div>
    <button class="notice" aria-label="通知"><svg width="26" height="24" viewBox="0 0 26 24"><path d="M1 1h15v12H9l-4 4v-4H1z" fill="#fff"/><path d="M3 4h11M3 7h11M3 10h7" stroke="#06171b"/></svg><span>1</span></button>
  </div>
</footer>

<div class="ball">74</div>

<div class="ime">
  <svg class="logo"><use href="#sogou"/></svg>
  <b>中</b><svg class="ic" viewBox="0 0 16 16"><circle cx="3.500" cy="6" r="1.700" fill="none" stroke="#1a75cc" stroke-width="1.300"/><path d="M10 9.500a1.800 1.800 0 1 1 2.600 1.500c0 1.500-.8 2.500-2.200 3" fill="#1a75cc" stroke="#1a75cc"/></svg>
  <svg class="ic"><use href="#smile"/></svg><svg class="ic"><use href="#mic"/></svg><svg class="ic"><use href="#kbd"/></svg><svg class="ic"><use href="#person"/></svg><svg class="ic"><use href="#shirt"/></svg><svg class="ic"><use href="#wrench"/></svg>
</div>

<div class="dialog" role="dialog" aria-labelledby="dlg-title">
  <div class="dlghead"><h2 id="dlg-title">其它箍筋类型设置</h2><button aria-label="关闭"><svg class="s10"><use href="#x"/></svg></button></div>
  <div class="dlgbody">
    <table class="grid hoops">
      <colgroup><col class="h-no"><col class="h-id"><col class="h-info"><col class="h-shape"></colgroup>
      <thead><tr><th></th><th>箍筋图号</th><th>箍筋信息</th><th class="hot">图形</th></tr></thead>
      <tbody><tr><th class="cur">1</th><td class="num mid">195</td><td class="num"><svg class="rebar" viewBox="0 0 10 12"><path d="M3.500 1v10M6.500 1v10M1 3.500h8v5H1zM0 11h10" fill="none" stroke="#000"/></svg>8@200</td>
        <td class="shape"><div><span>350</span><svg viewBox="0 0 36 24"><rect x="2" y="2" width="33" height="21" fill="none" stroke="#000" stroke-width="2"/><path d="m22 8 8-6M28 13l7-8" stroke="#000" stroke-width="2"/><text x="3" y="19">160</text></svg></div></td></tr></tbody>
    </table>
    <div class="redline"></div>
  </div>
  <div class="dlgfoot"><button>新建</button><button>删除</button><button>复制</button><button class="ok">确定</button><button>取消</button></div>
</div>
</body>
</html>
```
FILE: styles.css
```css
* { box-sizing: border-box; }
body {
  margin: 0;
  height: 100vh;
  display: flex;
  flex-direction: column;
  overflow: hidden;
  background: #f0f0f0;
  color: #000;
  font: 12px/16px "Open Sans", "Noto Sans CJK SC", sans-serif;
}
h1, h2, ul, figure { margin: 0; padding: 0; font-size: 12px; font-weight: 400; }
ul { list-style: none; }
button, input, select { font: inherit; color: inherit; }
button { margin: 0; padding: 0; border: 0; background: none; white-space: nowrap; }
button:disabled { color: #6d6d6d; }
svg { flex: none; }
.defs { position: absolute; width: 0; height: 0; }
.ic { width: 16px; height: 16px; }
.s10 { width: 10px; height: 10px; display: block; }
.ar { width: 6px; height: 4px; }
.more { width: 8px; height: 6px; margin: 4px 4px 0 auto; align-self: flex-start; }

/* Title and menu */
.titlebar { display: flex; align-items: center; height: 23px; padding-left: 2px; gap: 5px; background: #fff; flex: none; }
.titlebar h1 { color: #8f8f8f; white-space: nowrap; font-family: "Open Sans", "Noto Sans CJK SC", sans-serif; font-size: 13px; }
.titlebar h1 span { font-family: "Noto Sans CJK SC", sans-serif; font-size: 12px; }
.winbtns { display: flex; margin-left: auto; }
.winbtns button { width: 46px; height: 20px; }
.winbtns svg { width: 11px; height: 11px; display: block; margin: auto; }
.menubar { display: flex; align-items: center; height: 28px; padding: 0 6px 0 7px; gap: 11px; flex: none; font-family: "Noto Sans", "Noto Sans CJK SC", sans-serif; }
.menubar button { display: flex; align-items: center; gap: 3px; }
.menubar .wide { margin-left: 4px; }
.helper { margin-left: -4px; }
.account { display: flex; align-items: center; gap: 8px; margin-left: auto; }

/* Toolbars */
.toolbar { flex: none; display: flex; }
.toolbar button, .toolbar label { display: flex; align-items: center; gap: 4px; }
.main { height: 29px; gap: 2px; }
.strip { display: flex; align-items: center; gap: 7px; padding-left: 4px; height: 28px; background: linear-gradient(#fdfdfd, #efefef); border-radius: 3px; }
.sep { width: 1px; height: 16px; background: #b8b8b8; flex: none; }
.strip.files { width: 151px; gap: 8px; }
.files .wide { margin-left: 2px; }
.files .more { margin-right: 2px; }
.calc { width: 549px; }
.strip.view { flex: 1; padding-left: 1px; gap: 6px; }
.view .wide { margin: 0 1px 0 2px; }
.sigma { width: 14px; margin-right: 2px; font: bold 15px/16px "Liberation Sans", sans-serif; }
.dim { border: 1px solid #888; height: 23px; width: 62px; padding: 0 3px 0 2px; background: #f6f6f6; color: #6d6d6d; }
.toolbar select { appearance: none; border: 0; background: none; padding: 0; flex: 1; min-width: 0; opacity: 1; }
.sub { height: 29px; align-items: center; gap: 6px; padding-left: 8px; background: linear-gradient(#fdfdfd, #f0f0f0); }
.floor { margin-left: -2px; }
.combo { display: flex; align-items: center; width: 64px; height: 22px; padding: 0 5px; background: #fff; margin-right: -4px; }
.move { margin: 0 4px 0 2px; }
.toolbar .move { gap: 8px; }

/* Left dock */
.workspace { flex: 1; min-height: 0; display: flex; gap: 2px; }
.dock { width: 161px; flex: none; display: flex; flex-direction: column; padding: 1px 0 2px; }
.dockhead { display: flex; align-items: center; gap: 9px; height: 16px; padding-right: 4px; border: 1px solid #8f8f8f; border-left: 0; margin-bottom: 1px; flex: none; }
.dockhead h2 { margin-right: auto; }
.section { height: 22px; flex: none; border: 1px solid #9c9c9c; background: #f0f0f0; box-shadow: inset 1px 1px #fff; }
.section + .section { border-top: 0; }
.docktools { display: flex; align-items: center; gap: 7px; height: 28px; padding-left: 7px; background: linear-gradient(#fbfbfb, #ececec); flex: none; }
.docktools svg { display: block; }
.tree { font-family: "Liberation Serif", "Noto Sans CJK SC", serif; font-size: 12px; }
.modules { flex: 1; min-height: 0; overflow: hidden; margin: 0 1px 0 2px; border: 1px solid #82868f; background: #fff; }
.tree div, .tree ul li { display: flex; align-items: center; height: 16px; white-space: nowrap; }
.tree li { position: relative; }
.tw { width: 10px; height: 10px; }
.fo { width: 16px; height: 14px; margin: 0 4px 0 6px; }
.modules > li > div { padding-left: 7px; }
.modules ul li { padding-left: 42px; gap: 4px; }
.modules .ic { width: 16px; height: 15px; }
.tree ul li::before { content: ""; position: absolute; left: 31px; top: 0; width: 11px; height: 8px; border: dotted #7a7a7a; border-width: 0 0 1px 1px; }
.tree ul li:not(:last-child)::after { content: ""; position: absolute; left: 31px; top: 8px; height: 8px; border-left: 1px dotted #7a7a7a; }
.modules .open > ul { background: repeating-linear-gradient(#7a7a7a 0 1px, #fff 1px 2px) 12px 0 / 1px 100% no-repeat; }
.current { background: linear-gradient(#d9d9d9, #d9d9d9) 41px 0 / 56px 16px no-repeat; }

/* Component list */
.editor { flex: 1; min-width: 0; display: flex; flex-direction: column; }
.panes { flex: 1; min-height: 0; display: flex; gap: 4px; padding-left: 4px; }
.components { width: 183px; flex: none; display: flex; flex-direction: column; background: #fff; padding-top: 4px; margin-bottom: 2px; }
.search { display: flex; align-items: center; gap: 5px; padding-left: 1px; margin-bottom: 1px; }
.search input { width: 157px; height: 25px; padding: 0 2px 2px; border: 1px solid #7a7a7a; background: #fff; }
.search input::placeholder { color: #777; opacity: 1; }
.search svg { display: block; }
.listbox { flex: 1; min-height: 0; display: flex; justify-content: space-between; border: 1px solid #82868f; border-width: 1px 2px 2px 1px; padding: 1px 1px 1px 0; }
.beams { flex: 1; overflow: hidden; font-size: 13px; }
.beams > li > div { padding-left: 6px; font-size: 12px; }
.beams > li > div .ic { margin: 0 4px 0 7px; }
.beams ul li { padding-left: 43px; gap: 7px; }
.beams .zh { font-size: 12px; }
.ge { width: 12px; height: 12px; }
.beams span { padding: 0 4px 0 1px; }
.picked { color: #000; background: linear-gradient(#316ac5, #316ac5) 40px 0 / 81px 16px no-repeat; }
.scroll { width: 16px; flex: none; display: flex; flex-direction: column; align-items: center; background: #f0f0f0; padding: 5px 0; }
.scroll svg { width: 10px; height: 6px; }
.scroll i { width: 100%; background: #cdcdcd; margin: 6px 0 auto; }
.list i { height: 63%; }
.page i { height: 61%; }

/* Property sheet */
.props { flex: 1; min-width: 0; display: flex; flex-direction: column; background: #fff; border-left: 1px solid #dcdcdc; padding: 0 4px 3px 3px; border-bottom: 1px solid #dcdcdc; margin-bottom: 2px; }
.tabs { height: 21px; flex: none; margin: 0 -4px 3px -3px; background: linear-gradient(#d9d9d9, #d9d9d9) 0 100% / 100% 1px no-repeat; font-family: "Noto Sans CJK SC", sans-serif; }
.tabs button { width: 62px; height: 21px; background: #fff; border-right: 1px solid #d9d9d9; border-top: 1px solid #d9d9d9; }
.sheet { position: relative; flex: 1; min-height: 0; display: flex; justify-content: space-between; align-items: flex-start; border: 1px solid #a0a0a0; padding: 1px 2px 1px 1px; }
.page { align-self: stretch; }
.grid { border-collapse: separate; border-spacing: 0; table-layout: fixed; line-height: 16px; font-family: "Noto Sans CJK SC", sans-serif; }
.grid th, .grid td { padding: 0; height: 19px; border: solid #bdbdbd; border-width: 0 1px 1px 0; font-weight: 400; text-align: left; white-space: nowrap; overflow: hidden; }
.grid th { background: linear-gradient(#fff, #efefef); text-align: center; }
.grid tbody th { background: #f4f4f4; font-family: "Liberation Sans", sans-serif; font-size: 11px; }
.grid thead th { height: 23px; }
.grid th.hot { background: linear-gradient(#f9d9a0, #f1c063); color: #5a0050; }
.sheet .grid { width: 369px; }
.c-no { width: 21px; }
.c-name { width: 191px; }
.c-val { width: 126px; }
.c-add { width: 31px; }
.sheet .grid td:nth-child(2) { padding-left: 20px; }
.sheet .grid td:nth-child(3) { padding-left: 2px; }
.grid .key { color: #00f; }
.grid .latin { font-family: "Liberation Serif", serif; font-size: 13px; }
.grid .num { font-family: "Liberation Sans", sans-serif; font-size: 11px; }
.grid .tick { text-align: center; }
.tick input { appearance: none; width: 13px; height: 13px; margin: 0; border: 1px solid #333; background: #fff; display: block; margin: auto; }
.grid .active td { background: #0078d7; color: #fff; }
.grid .active th, .grid th.cur { background: #ffd58c; color: #5a0050; }
.grid .group td { color: #808080; }
.sheet .grid .group td:nth-child(2) { padding-left: 2px; }
.group button { width: 13px; height: 13px; margin-right: 5px; border: 1px solid #b0b0b0; vertical-align: middle; background: #fff; }
.group svg { width: 11px; height: 11px; display: block; }
.preview { position: absolute; right: 17px; top: 1px; width: 270px; height: 284px; padding: 1px 7px 7px; display: flex; flex-direction: column; border: 1px solid #505050; background: linear-gradient(#bccddb, #d9e4f1 28px); }
.preview figcaption { height: 29px; padding-top: 9px; color: #8c949c; font-family: "Noto Sans CJK SC", sans-serif; }
.preview svg { width: 254px; height: 244px; border-top: 1px solid #fff; }
.dwg { fill: #fff; font-family: "Liberation Serif", "Noto Sans CJK SC", serif; }

/* Dialog */
.dialog { position: fixed; inset: 0; margin: auto; top: -2px; width: 456px; height: 349px; display: flex; flex-direction: column; background: #f0f0f0; border: 1px solid #2f84dd; box-shadow: 2px 4px 14px rgba(0, 0, 0, .4); }
.dlghead { display: flex; align-items: center; justify-content: space-between; height: 25px; padding: 0 10px 0 3px; background: #fff; flex: none; }
.dlgbody { flex: 1; background: #fff; border: 1px solid #a9a9a9; padding: 1px; }
.hoops { width: 404px; }
.h-no { width: 21px; }
.h-id { width: 61px; }
.h-info { width: 121px; }
.h-shape { width: 201px; }
.hoops thead th { height: 19px; }
.hoops tbody td, .hoops tbody th { height: 34px; }
.grid .mid { text-align: center; }
.hoops td:nth-child(3) { padding-left: 3px; }
.rebar { width: 10px; height: 12px; vertical-align: -2px; }
.grid .shape { background: #d8e9f8; outline: 1px dotted #222; outline-offset: -1px; font: 11px/16px "Liberation Sans", sans-serif; }
.shape div { display: flex; align-items: center; gap: 8px; padding-left: 54px; }
.shape svg { width: 36px; height: 24px; fill: #f00; }
.redline { width: 370px; height: 11px; margin: 10px 0 0 7px; background: #f00; }
.dlgfoot { display: flex; align-items: center; gap: 7px; height: 41px; padding: 1px 13px 0 5px; flex: none; }
.dlgfoot button { width: 73px; height: 24px; border: 1px solid #adadad; background: #e1e1e1; }
.dlgfoot .ok { margin-left: auto; }

/* Status bar */
.status { display: flex; gap: 2px; height: 21px; padding-bottom: 1px; font: 12px/18px "Liberation Serif", "Noto Sans CJK SC", serif; flex: none; }
.status span { border: 1px solid #d0d0d0; background: linear-gradient(#fff, #f0f0f0); padding-left: 1px; white-space: nowrap; }
.s-blank { width: 148px; }
.s-h { width: 78px; }
.s-b { width: 98px; }
.s-z { width: 48px; }
.s-msg { flex: 1; }
.status .s-fps { width: 71px; font-size: 13px; }

/* Taskbar */
.taskbar { display: flex; height: 40px; background: #06171b; color: #fff; flex: none; }
.start { width: 48px; background: #050c10; }
.start svg { width: 16px; height: 16px; display: block; margin: auto; }
.cortana { width: 344px; display: flex; align-items: center; gap: 10px; padding: 0 14px 0 10px; background: #f2f2f2; }
.cortana input, .iesearch input { flex: 1; min-width: 0; border: 0; background: none; padding: 0; font-family: "Noto Sans CJK SC", sans-serif; }
.cortana input { font-size: 14px; }
.cortana input::placeholder { color: #444; opacity: 1; }
.ring { width: 20px; height: 20px; }
.tmic { width: 12px; height: 18px; }
.t48 { width: 49px; display: flex; align-items: center; justify-content: center; border-bottom: 2px solid transparent; }
.iesearch { width: 150px; height: 30px; margin: 5px 2px 0; padding: 0 6px 0 4px; display: flex; align-items: center; gap: 3px; border: 1px solid #6d6d6d; background: #454545; }
.iesearch input::placeholder { color: #a9a9a9; opacity: 1; }
.run { background: linear-gradient(#7ab8f5, #7ab8f5) 50% 100% / 40px 2px no-repeat; border: 0; }
.on { background: linear-gradient(#7ab8f5, #7ab8f5) 0 100% / 49px 2px no-repeat #36444a; }
.pdf { width: 24px; height: 24px; border: 1px solid #aaa; border-radius: 4px; background: #cf6a12; font: bold 10px/22px "Liberation Sans", sans-serif; }
.tscroll { width: 17px; margin-left: 17px; background: #f0f0f0; display: flex; flex-direction: column; justify-content: space-between; align-items: center; padding: 6px 0 5px; }
.tscroll svg { width: 10px; height: 6px; }
.tray { margin-left: auto; display: flex; align-items: center; gap: 10px; padding-right: 10px; }
.tray > svg:first-child { margin-right: 21px; }
.cpu { text-align: center; margin-right: 10px; }
.clock { text-align: center; margin: 0 11px 0 8px; }
.cpu, .clock { line-height: 18px; }
.lang { font-size: 13px; }
.notice { position: relative; height: 40px; width: 32px; }
.notice svg { display: block; margin-top: 6px; }
.notice span { position: absolute; right: 1px; bottom: 5px; width: 16px; height: 16px; border: 1px solid #aaa; border-radius: 8px; background: #2a3236; line-height: 14px; }

/* Floating widgets */
.ball { position: fixed; left: calc(50% + 34px); top: -28px; width: 47px; height: 47px; padding-top: 26px; border: 2px solid #8a9a8a; border-radius: 50%; background: #42c45c; color: #fff; font-weight: 700; font-size: 12px; line-height: 16px; text-align: center; box-shadow: 0 1px 5px rgba(0, 0, 0, .4); }
.ime { position: fixed; right: 165px; top: 19px; width: 198px; height: 24px; display: flex; align-items: center; justify-content: flex-end; gap: 6px; padding-right: 3px; border: 1px solid #a8bdd6; background: #fbfdff; color: #1a75cc; font-size: 15px; line-height: 20px; }
.ime .logo { position: absolute; left: -9px; top: -4px; width: 29px; height: 28px; }
```
